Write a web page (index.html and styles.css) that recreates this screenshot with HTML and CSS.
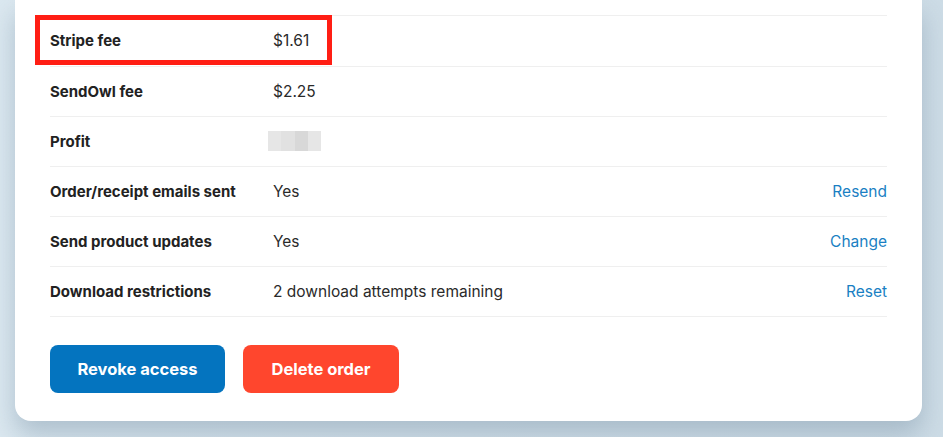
FILE: index.html
```html
<!DOCTYPE html>
<html>
<head>
<meta charset="utf-8">
<link rel="stylesheet" href="styles.css">
</head>
<body>
<div class="page">
  <div class="card">
    <div class="rows">
      <div class="row first">
        <div class="label">Stripe fee</div>
        <div class="value">$1.61</div>
        <div class="highlight"></div>
      </div>
      <div class="row">
        <div class="label">SendOwl fee</div>
        <div class="value">$2.25</div>
      </div>
      <div class="row">
        <div class="label">Profit</div>
        <div class="value"><span class="blur"><i class="b1"></i><i class="b2"></i><i class="b3"></i><i class="b4"></i></span></div>
      </div>
      <div class="row">
        <div class="label">Order/receipt emails sent</div>
        <div class="value">Yes</div>
        <a class="action">Resend</a>
      </div>
      <div class="row">
        <div class="label">Send product updates</div>
        <div class="value">Yes</div>
        <a class="action">Change</a>
      </div>
      <div class="row">
        <div class="label">Download restrictions</div>
        <div class="value">2 download attempts remaining</div>
        <a class="action">Reset</a>
      </div>
    </div>
    <div class="buttons">
      <button class="btn revoke">Revoke access</button>
      <button class="btn delete">Delete order</button>
    </div>
  </div>
</div>
</body>
</html>
```
FILE: styles.css
```css
html, body {
  margin: 0;
  padding: 0;
}
body {
  width: 943px;
  height: 437px;
  overflow: hidden;
  background: linear-gradient(90deg, #dbe8f0 0%, #d3e1ea 50%, #cddce6 100%);
  font-family: Inter, "Noto Sans", sans-serif;
}
.page {
  padding-left: 15px;
  padding-right: 21px;
}
.card {
  background: #ffffff;
  border-radius: 0 0 16px 16px;
  padding: 15px 35px 28px 35px;
  box-shadow: 0 14px 26px rgba(120, 145, 165, 0.45);
}
.row {
  position: relative;
  display: flex;
  align-items: center;
  box-sizing: border-box;
  height: 50px;
  padding-bottom: 1px;
  border-bottom: 1px solid #efefef;
}
.row.first {
  height: 52px;
  padding-bottom: 2px;
  border-top: 1px solid #efefef;
}
.label {
  width: 223px;
  flex: none;
  font-weight: 700;
  font-size: 15px;
  color: #222222;
}
.value {
  flex: 1;
  font-size: 15.5px;
  color: #2a2a2a;
}
.action {
  font-size: 15.5px;
  color: #1a7fc3;
}
.highlight {
  position: absolute;
  left: -15px;
  top: -1px;
  width: 287px;
  height: 40px;
  border: 5px solid #ff1e14;
}
.blur {
  display: inline-flex;
  vertical-align: middle;
  margin-left: -5px;
  height: 20px;
}
.blur i {
  display: block;
  height: 20px;
}
.b1 { width: 13px; background: #e6e6e6; }
.b2 { width: 14px; background: #e1e1e1; }
.b3 { width: 13px; background: #d8d8d8; }
.b4 { width: 13px; background: #e6e6e6; }
.buttons {
  display: flex;
  gap: 18px;
  margin-top: 28px;
}
.btn {
  border: none;
  height: 48px;
  border-radius: 8px;
  color: #ffffff;
  font-family: Inter, "Noto Sans", sans-serif;
  font-weight: 700;
  font-size: 16.5px;
}
.revoke {
  width: 175px;
  background: #0474bf;
}
.delete {
  width: 156px;
  background: #ff462d;
}
```
